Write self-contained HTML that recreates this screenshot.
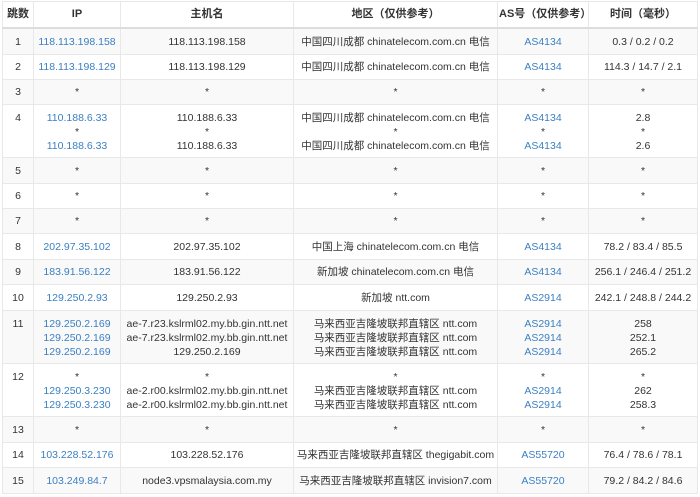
<!DOCTYPE html>
<html><head><meta charset="utf-8"><style>
body{margin:0;background:#fff;font-family:"Liberation Sans","Noto Sans CJK SC",sans-serif;font-size:10.5px;color:#333}
table{position:absolute;left:2px;top:1px;width:695px;border-collapse:collapse;table-layout:fixed}
td,th{border:1px solid #e8e8e8;text-align:center;vertical-align:top;padding:5px 1px 0;line-height:14px;overflow:hidden;white-space:nowrap}
th{height:20px;font-weight:bold;padding-top:5px;border-bottom:2px solid #ddd;background:#fff;font-size:11px}
tr.s td{height:19px;padding-top:5px}
tr.s.b td{height:20px;padding-top:6px;height:19px}
tr.t td{height:47px;padding-top:6px;height:46px}
tbody tr:nth-child(odd) td{background:#f9f9f9}
tbody tr:nth-child(even) td{background:#fff}
a{color:#3b80c3;text-decoration:none}
</style></head><body>
<table>
<colgroup><col style="width:31px"><col style="width:87px"><col style="width:173px"><col style="width:204px"><col style="width:91px"><col style="width:109px"></colgroup>
<thead><tr><th>跳数</th><th>IP</th><th>主机名</th><th>地区（仅供参考）</th><th>AS号（仅供参考）</th><th>时间（毫秒）</th></tr></thead>
<tbody>
<tr class="s b"><td>1</td><td><a>118.113.198.158</a></td><td>118.113.198.158</td><td>中国四川成都 chinatelecom.com.cn 电信</td><td><a>AS4134</a></td><td>0.3 / 0.2 / 0.2</td></tr>
<tr class="s"><td>2</td><td><a>118.113.198.129</a></td><td>118.113.198.129</td><td>中国四川成都 chinatelecom.com.cn 电信</td><td><a>AS4134</a></td><td>114.3 / 14.7 / 2.1</td></tr>
<tr class="s"><td>3</td><td>*</td><td>*</td><td>*</td><td>*</td><td>*</td></tr>
<tr class="t"><td>4</td><td><a>110.188.6.33</a><br>*<br><a>110.188.6.33</a></td><td>110.188.6.33<br>*<br>110.188.6.33</td><td>中国四川成都 chinatelecom.com.cn 电信<br>*<br>中国四川成都 chinatelecom.com.cn 电信</td><td><a>AS4134</a><br>*<br><a>AS4134</a></td><td>2.8<br>*<br>2.6</td></tr>
<tr class="s b"><td>5</td><td>*</td><td>*</td><td>*</td><td>*</td><td>*</td></tr>
<tr class="s"><td>6</td><td>*</td><td>*</td><td>*</td><td>*</td><td>*</td></tr>
<tr class="s"><td>7</td><td>*</td><td>*</td><td>*</td><td>*</td><td>*</td></tr>
<tr class="s b"><td>8</td><td><a>202.97.35.102</a></td><td>202.97.35.102</td><td>中国上海 chinatelecom.com.cn 电信</td><td><a>AS4134</a></td><td>78.2 / 83.4 / 85.5</td></tr>
<tr class="s"><td>9</td><td><a>183.91.56.122</a></td><td>183.91.56.122</td><td>新加坡 chinatelecom.com.cn 电信</td><td><a>AS4134</a></td><td>256.1 / 246.4 / 251.2</td></tr>
<tr class="s b"><td>10</td><td><a>129.250.2.93</a></td><td>129.250.2.93</td><td>新加坡 ntt.com</td><td><a>AS2914</a></td><td>242.1 / 248.8 / 244.2</td></tr>
<tr class="t"><td>11</td><td><a>129.250.2.169</a><br><a>129.250.2.169</a><br><a>129.250.2.169</a></td><td>ae-7.r23.kslrml02.my.bb.gin.ntt.net<br>ae-7.r23.kslrml02.my.bb.gin.ntt.net<br>129.250.2.169</td><td>马来西亚吉隆坡联邦直辖区 ntt.com<br>马来西亚吉隆坡联邦直辖区 ntt.com<br>马来西亚吉隆坡联邦直辖区 ntt.com</td><td><a>AS2914</a><br><a>AS2914</a><br><a>AS2914</a></td><td>258<br>252.1<br>265.2</td></tr>
<tr class="t"><td>12</td><td>*<br><a>129.250.3.230</a><br><a>129.250.3.230</a></td><td>*<br>ae-2.r00.kslrml02.my.bb.gin.ntt.net<br>ae-2.r00.kslrml02.my.bb.gin.ntt.net</td><td>*<br>马来西亚吉隆坡联邦直辖区 ntt.com<br>马来西亚吉隆坡联邦直辖区 ntt.com</td><td>*<br><a>AS2914</a><br><a>AS2914</a></td><td>*<br>262<br>258.3</td></tr>
<tr class="s b"><td>13</td><td>*</td><td>*</td><td>*</td><td>*</td><td>*</td></tr>
<tr class="s"><td>14</td><td><a>103.228.52.176</a></td><td>103.228.52.176</td><td>马来西亚吉隆坡联邦直辖区 thegigabit.com</td><td><a>AS55720</a></td><td>76.4 / 78.6 / 78.1</td></tr>
<tr class="s b"><td>15</td><td><a>103.249.84.7</a></td><td>node3.vpsmalaysia.com.my</td><td>马来西亚吉隆坡联邦直辖区 invision7.com</td><td><a>AS55720</a></td><td>79.2 / 84.2 / 84.6</td></tr>
</tbody></table>
</body></html>
